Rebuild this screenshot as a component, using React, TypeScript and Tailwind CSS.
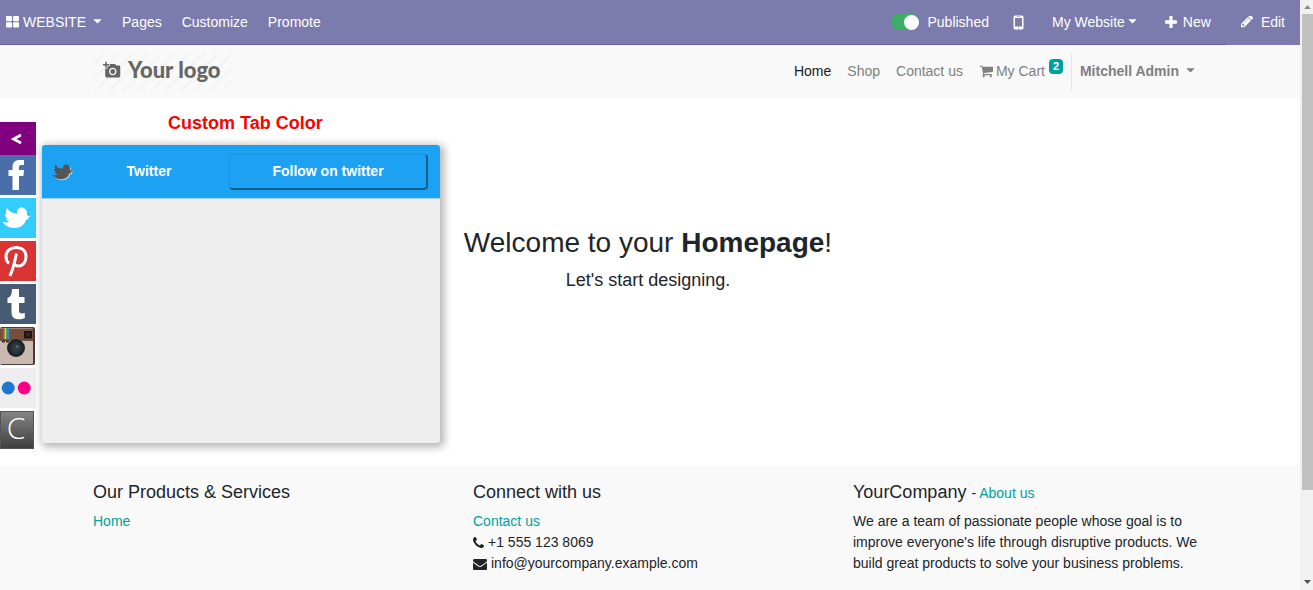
import type { ReactNode } from "react";
import { MdAddAPhoto } from "react-icons/md";

const ICONS = {
  plus: "M1600 736v192q0 40-28 68t-68 28h-416v416q0 40-28 68t-68 28h-192q-40 0-68-28t-28-68v-416h-416q-40 0-68-28t-28-68v-192q0-40 28-68t68-28h416v-416q0-40 28-68t68-28h192q40 0 68 28t28 68v416h416q40 0 68 28t28 68z",
  pencil:
    "M491 1536l91-91-235-235-91 91v107h128v128h107zm523-928q0-22-22-22-10 0-17 7l-542 542q-7 7-7 17 0 22 22 22 10 0 17-7l542-542q7-7 7-17zm-54-192l416 416-832 832h-416v-416zm683 96q0 53-37 90l-166 166-416-416 166-165q36-38 90-38 53 0 91 38l235 234q37 39 37 91z",
  cart: "M704 1536q0 52-38 90t-90 38-90-38-38-90 38-90 90-38 90 38 38 90zm896 0q0 52-38 90t-90 38-90-38-38-90 38-90 90-38 90 38 38 90zm128-1088v512q0 24-16.5 42.5t-40.5 21.5l-1044 122q13 60 13 70 0 16-24 64h920q26 0 45 19t19 45-19 45-45 19h-1024q-26 0-45-19t-19-45q0-11 8-31.5t16-36 21.500-40 15.500-29.500l-177-823h-204q-26 0-45-19t-19-45 19-45 45-19h256q16 0 28.500 6.500t19.500 15.500 13 24.500 8 26 5.500 29.500 4.500 26h1201q26 0 45 19t19 45z",
  phone:
    "M1600 1240q0 27-10 70.500t-21 68.500q-21 50-122 106-94 51-186 51-27 0-52.500-3.500t-57.500-12.500-47.500-14.500-55.500-20.500-49-18q-98-35-175-83-128-79-264.500-215.500t-215.500-264.500q-48-77-83-175-3-9-18-49t-20.500-55.500-14.500-47.500-12.500-57.500-3.500-52.500q0-92 51-186 56-101 106-122 25-11 68.500-21t70.500-10q14 0 21 3 18 6 53 76 11 19 30 54t35 63.500 31 53.500q3 4 17.500 25t21.500 35.500 7 28.500q0 20-28.500 50t-62 55-62 53-28.500 46q0 9 5 22.500t8.500 20.500 14 24 11.500 19q76 137 174 235t235 174q2 1 19 11.500t24 14 20.500 8.500 22.500 5q18 0 46-28.500t53-62 55-62 50-28.500q14 0 28.500 7t35.500 21.500 25 17.500q25 15 53.500 31t63.500 35 54 30q70 35 76 53 3 7 3 21z",
  envelope:
    "M1792 710v794q0 66-47 113t-113 47h-1472q-66 0-113-47t-47-113v-794q44 49 101 87 362 246 497 345 57 42 92.500 65.500t94.500 48 110 24.500h2q51 0 110-24.500t94.500-48 92.500-65.500q170-123 498-345 57-39 100-87zm0-294q0 79-49 151t-122 123q-376 261-468 325-10 7-42.500 31t-54 38.500-52 32.500-57.500 27-50 9h-2q-23 0-50-9t-57.500-27-52-32.500-54-38.500-42.500-31q-91-64-262-182.500t-205-142.500q-62-42-117-115.500t-55-136.500q0-78 41.500-130t118.500-52h1472q65 0 112.500 47t47.500 113z",
};

const BIRD =
  "M7 10C9.500 14 13 15.500 17 15.500c-.3-3.500 1.500-6 4.500-6 3 0 5.500 2.500 5.500 6v2l3.500.8-3 1.800 1.500 1-3 .7c-1.500 5-5.500 8.200-11 8.200C9.500 30 5 28 2.500 23.500c2.500 1.200 4.800 1.200 7 .3-2-.5-3-1.500-3.500-3h1.800C6 19.500 5 18 5 16h1.500C5.500 14 5.800 12 7 10z";

function Icon({ name, box = "0 0 1792 1792", className }: { name: keyof typeof ICONS; box?: string; className: string }) {
  return (
    <svg className={className} viewBox={box} fill="currentColor" aria-hidden="true">
      <path d={ICONS[name]} />
    </svg>
  );
}

function Caret({ className = "" }: { className?: string }) {
  return (
    <svg className={`-mt-0.5 h-[5px] w-[9px] ${className}`} viewBox="0 0 9 5" fill="currentColor" aria-hidden="true">
      <path d="M.3.300h8.400L4.500 4.600z" />
    </svg>
  );
}

function TopBar() {
  return (
    <header className="flex h-[45px] items-center border-b border-[#5f5e97] bg-[#7c7bad] pl-1.5 text-white">
      <nav className="flex items-center gap-5">
        <button className="flex items-center">
          <svg className="mr-1 h-3 w-[13px]" viewBox="0 0 13 12" fill="currentColor" aria-hidden="true">
            <rect width="6" height="5.300" rx="1" />
            <rect x="7" width="6" height="5.300" rx="1" />
            <rect y="6.300" width="6" height="5.300" rx="1" />
            <rect x="7" y="6.300" width="6" height="5.300" rx="1" />
          </svg>
          WEBSITE
          <Caret className="ml-[7px]" />
        </button>
        <a href="#pages">Pages</a>
        <a href="#customize">Customize</a>
        <a href="#promote">Promote</a>
      </nav>
      <div className="ml-auto flex items-center">
        <label className="flex cursor-pointer items-center gap-2">
          <input type="checkbox" defaultChecked className="peer sr-only" />
          <span className="flex h-4 w-7 items-center justify-end rounded-full bg-[#40ad67]">
            <span className="size-[15px] rounded-full bg-white" />
          </span>
          Published
        </label>
        <button aria-label="Mobile preview" className="ml-6">
          <svg className="h-[15px] w-[11px]" viewBox="0 0 11 15" aria-hidden="true">
            <path
              fill="currentColor"
              fillRule="evenodd"
              d="M2 .5h7A1.500 1.500 0 0 1 10.500 2v11A1.500 1.500 0 0 1 9 14.500H2A1.500 1.500 0 0 1 .5 13V2A1.500 1.500 0 0 1 2 .5zM2 3v8.500h7V3zM4 1.500v.5h3v-.5zM5.500 12.400a.6.600 0 1 0 0 1.200.6.600 0 0 0 0-1.200z"
            />
          </svg>
        </button>
        <button className="ml-7 flex items-center gap-[3px]">
          My Website
          <Caret />
        </button>
        <button className="ml-7 flex items-center gap-1.5">
          <Icon name="plus" box="192 128 1408 1408" className="size-3" />
          New
        </button>
        <button className="ml-[15px] flex h-11 items-center gap-2 px-[15px] shadow-[0_1px_0_#7c7bad]">
          <Icon name="pencil" box="128 250 1515 1515" className="size-3" />
          Edit
        </button>
      </div>
    </header>
  );
}

function Logo() {
  return (
    <a
      href="#home"
      className="flex h-[38px] w-[139px] items-center gap-[7px] bg-[repeating-linear-gradient(135deg,#f9f9f9_0_7px,#f4f4f4_7px_10px)] pb-1 pl-2.5 font-['Lato',sans-serif] text-[22px] font-black text-[#666]"
    >
      <MdAddAPhoto className="size-[18px]" />
      Your logo
    </a>
  );
}

function SiteNav() {
  return (
    <div className="bg-[#f9f9f9] pr-1">
      <div className="mx-auto flex h-[53px] max-w-[1140px] items-center px-[15px] text-[#808080]">
        <Logo />
        <nav className="ml-auto flex items-center gap-4">
          <a href="#home" className="text-[#1a1a1a]">Home</a>
          <a href="#shop">Shop</a>
          <a href="#contact">Contact us</a>
          <a href="#cart" className="flex items-center gap-[3px]">
            <Icon name="cart" box="0 192 1728 1536" className="h-[13px] w-3.5" />
            My Cart
            <span className="ml-px -mt-2.5 flex h-[15px] w-3.5 items-center justify-center rounded bg-[#00a09d] text-[11px] font-bold text-white">
              2
            </span>
          </a>
        </nav>
        <button className="ml-2 flex h-[38px] items-center border-l border-[#e6e6e6] px-2 font-bold">
          Mitchell Admin
          <Caret className="ml-[7px]" />
        </button>
      </div>
    </div>
  );
}

function TileIcon({ children }: { children: ReactNode }) {
  return (
    <svg className="h-10 w-9" viewBox="0 0 36 40" fill="currentColor" aria-hidden="true">
      {children}
    </svg>
  );
}

function InstagramIcon() {
  return (
    <svg className="h-[38px] w-[35px]" viewBox="0 0 35 38" aria-hidden="true">
      <rect width="35" height="38" rx="2" fill="#4b3b35" />
      <rect width="33" height="36" y="1" rx="1" fill="#cbbab2" />
      <path d="M0 1.500h33V14H0z" fill="#75503f" />
      <path d="M3 1h1.500v11H3z" fill="#e33a2e" />
      <path d="M4.500 1H6v11H4.500z" fill="#f2c230" />
      <path d="M6 1h1.500v11H6z" fill="#4cae4c" />
      <path d="M7.500 1H9v11H7.500z" fill="#3b8ede" />
      <rect x="24" y="4" width="8" height="7.500" rx="1" fill="#1d1210" />
      <rect x="26" y="5.500" width="4" height="4" fill="#38231f" />
      <path d="M2 14.500h3M6 14.500h3" stroke="#3b2c28" strokeWidth="2" />
      <circle cx="16" cy="21" r="9" fill="#1c2426" />
      <circle cx="16" cy="21" r="6" fill="#26363b" />
      <circle cx="16" cy="21" r="3.800" fill="#353643" />
      <circle cx="17" cy="19.500" r="1.500" fill="#65606f" />
    </svg>
  );
}

function Tile({ label, className, children }: { label: string; className: string; children: ReactNode }) {
  return (
    <button aria-label={label} className={`flex items-center justify-center text-white ${className}`}>
      {children}
    </button>
  );
}

function SocialTabs() {
  return (
    <aside className="absolute top-6 left-0">
      <Tile label="Collapse" className="h-[33px] w-9 bg-[#800080] pr-1">
        <svg className="h-3 w-3" viewBox="0 0 12 12" fill="none" stroke="currentColor" strokeWidth="2.600" aria-hidden="true">
          <path d="M11 2 3.500 6 11 10" />
        </svg>
      </Tile>
      <div className="flex flex-col gap-[3px]">
        <Tile label="Facebook" className="h-10 w-9 bg-[#4a6ea9]">
          <TileIcon>
            <path d="M19 35h-6.500V21H8.500v-6h4v-2.500c0-5 2.500-7.500 7-7.500H24v5h-2.700c-1.800 0-2.300.8-2.300 2.300V15h5l-.6 6H19z" />
          </TileIcon>
        </Tile>
        <Tile label="Twitter" className="h-10 w-9 bg-[#33ccff]">
          <TileIcon>
            <path d={BIRD} />
          </TileIcon>
        </Tile>
        <Tile label="Pinterest" className="h-10 w-9 bg-[#d93434]">
          <TileIcon>
            <g fill="none" stroke="currentColor" strokeWidth="3">
              <path d="M9 22.500C6.500 20.500 6 18 6 15.500 6 10 10.500 6.500 16 6.500c6 0 10 3.500 10 9 0 6-3.500 9.500-7.500 9.500-2.500 0-4-1-4.500-3" />
              <path d="M16.500 12.500C14.500 21 13.500 28 9.800 35" />
            </g>
          </TileIcon>
        </Tile>
        <Tile label="Tumblr" className="h-10 w-9 bg-[#475b74]">
          <TileIcon>
            <path d="M12 5h7v8h5.500v6H19v7.500c0 2 1 3 3 3 1 0 2-.3 2.800-.8V34c-2 1-4 1.300-6 1.300-5 0-7.300-2.500-7.300-7V19h-4v-5c3-.8 4.500-3.500 4.500-9z" />
          </TileIcon>
        </Tile>
        <Tile label="Instagram" className="h-[38px] w-[35px]">
          <InstagramIcon />
        </Tile>
        <Tile label="Flickr" className="h-10 w-9 bg-[#eeeeee]">
          <TileIcon>
            <circle cx="8.200" cy="20" r="6.500" fill="#1f75d0" />
            <circle cx="24.200" cy="20" r="6.500" fill="#ff0084" />
          </TileIcon>
        </Tile>
        <Tile
          label="Custom tab"
          className="h-[38px] w-[34px] border border-[#555] bg-linear-to-b from-[#858585] to-[#404040] pr-0.5 pb-1 font-['Open_Sans',sans-serif] text-[30px] leading-8 font-light text-[#ddd]"
        >
          C
        </Tile>
      </div>
    </aside>
  );
}

function TwitterPanel() {
  return (
    <section className="absolute top-[47px] left-[42px] h-[298px] w-[398px] rounded-[3px] bg-[#eeeeee] shadow-[2px_2px_8px_2px_rgba(0,0,0,0.3)]">
      <div className="flex h-[54px] items-center rounded-t-[3px] border-b border-[#a8d3f0] bg-[#1da1f2] pr-3 pl-2.5 font-bold text-white">
        <svg
          className="h-4 w-[21px] text-[#555] drop-shadow-[1px_1px_0_#b0cfe3]"
          viewBox="2 9 29 22"
          fill="currentColor"
          aria-hidden="true"
        >
          <path d={BIRD} />
        </svg>
        <h3 className="flex-1 pr-1 text-center">Twitter</h3>
        <button className="h-9 w-[199px] rounded border border-r-2 border-b-2 border-[#1994df] border-r-[#12608f] border-b-[#12608f]">
          Follow on twitter
        </button>
      </div>
    </section>
  );
}

function Footer() {
  return (
    <footer className="flex-1 bg-[#f9f9f9] pt-4 pr-1">
      <div className="mx-auto grid max-w-[1140px] grid-cols-3 *:px-[15px]">
        <div>
          <h4 className="mb-2 text-lg leading-[22px]">Our Products &amp; Services</h4>
          <a href="#home" className="text-[#00a09d]">Home</a>
        </div>
        <div>
          <h4 className="mb-2 text-lg leading-[22px]">Connect with us</h4>
          <ul>
            <li>
              <a href="#contact" className="text-[#00a09d]">Contact us</a>
            </li>
            <li className="flex items-center gap-1">
              <Icon name="phone" box="192 128 1408 1408" className="size-[11px]" />
              +1 555 123 8069
            </li>
            <li className="flex items-center gap-1">
              <Icon name="envelope" box="0 128 1792 1536" className="h-3 w-3.5" />
              info@yourcompany.example.com
            </li>
          </ul>
        </div>
        <div>
          <h4 className="mb-2 text-lg leading-[22px]">
            YourCompany{" "}
            <span className="text-sm leading-none">
              - <a href="#about" className="text-[#00a09d]">About us</a>
            </span>
          </h4>
          <p>
            We are a team of passionate people whose goal is to improve everyone's life through disruptive products. We
            build great products to solve your business problems.
          </p>
        </div>
      </div>
    </footer>
  );
}

function ScrollRail() {
  return (
    <div className="flex w-[13px] shrink-0 flex-col items-end bg-[#f1f1f1]" aria-hidden="true">
      <svg className="h-3.5 w-[11px] shrink-0" viewBox="0 0 11 14" fill="#8b8b8b">
        <path d="M2 9h7L5.500 5z" />
      </svg>
      <div className="flex w-[11px] flex-1 flex-col">
        <div className="h-[85%] bg-[#c1c1c1]" />
      </div>
      <svg className="h-4 w-[11px] shrink-0" viewBox="0 0 11 16" fill="#505050">
        <path d="M2 6h7L5.500 10z" />
      </svg>
    </div>
  );
}

export default function App() {
  return (
    <div className="flex h-screen overflow-hidden bg-white font-['Liberation_Sans',Arial,sans-serif] text-sm leading-[21px] text-[#212529]">
      <div className="flex min-w-0 flex-1 flex-col">
        <TopBar />
        <SiteNav />
        <main className="relative min-h-[367px] pr-1 text-center">
          <h2 className="absolute top-3.5 left-[168px] text-lg leading-[22px] font-bold text-[#ff0000]">Custom Tab Color</h2>
          <SocialTabs />
          <TwitterPanel />
          <h1 className="pt-32 text-[28px] leading-[34px]">
            Welcome to your <b>Homepage</b>!
          </h1>
          <p className="mt-1.5 text-lg leading-7">Let's start designing.</p>
        </main>
        <Footer />
      </div>
      <ScrollRail />
    </div>
  );
}
